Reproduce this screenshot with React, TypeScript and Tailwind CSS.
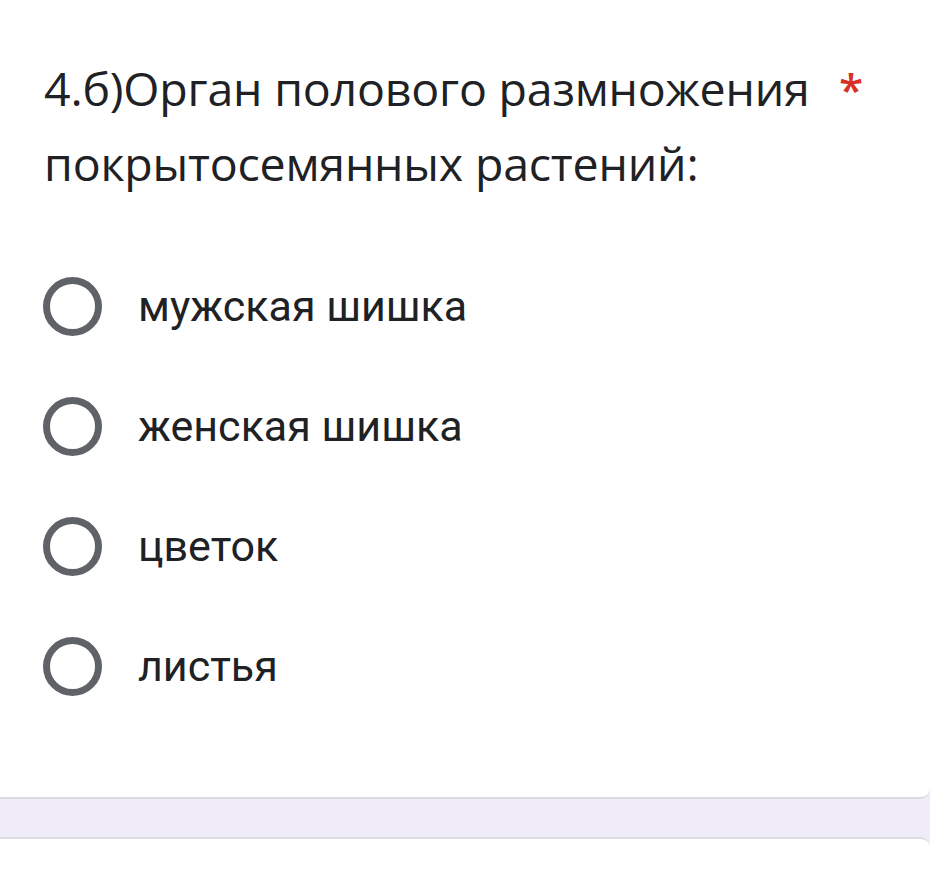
import React from "react";

const options = ["мужская шишка", "женская шишка", "цветок", "листья"];

export default function App() {
  return (
    <div className="w-[930px] h-[894px] bg-[#f0ebf8] overflow-hidden flex flex-col">
      <div className="bg-white h-[799px] -ml-4 rounded-br-[10px] border-b-2 border-[#dadce0] flex flex-col">
        <div className="pl-[60px] pt-[51px] flex">
          <div
            className="text-[46.5px] leading-[75px] text-[#202124] w-[790px] tracking-[-0.2px]"
            style={{ fontFamily: "'Open Sans', 'Noto Sans', sans-serif" }}
          >
            4.б)Орган полового размножения покрытосемянных растений:
          </div>
          <span
            className="text-[#d93025] text-[44px] leading-none ml-[5px] mt-[16px] font-semibold"
            style={{ fontFamily: "'Open Sans', sans-serif" }}
          >
            *
          </span>
        </div>
        <div className="flex flex-col pl-[59px] pt-[76px] gap-[61px]">
          {options.map((o) => (
            <div key={o} className="flex items-center h-[59px]">
              <div className="w-[59px] h-[59px] rounded-full border-[7px] border-[#5f6368] shrink-0" />
              <span
                className="ml-[36px] text-[43px] text-[#202124] leading-none"
                style={{ fontFamily: "Roboto, sans-serif" }}
              >
                {o}
              </span>
            </div>
          ))}
        </div>
      </div>
      <div className="h-[38px]" />
      <div className="bg-white flex-1 -ml-4 rounded-tr-[10px] border-t-2 border-[#dadce0]" />
    </div>
  );
}
